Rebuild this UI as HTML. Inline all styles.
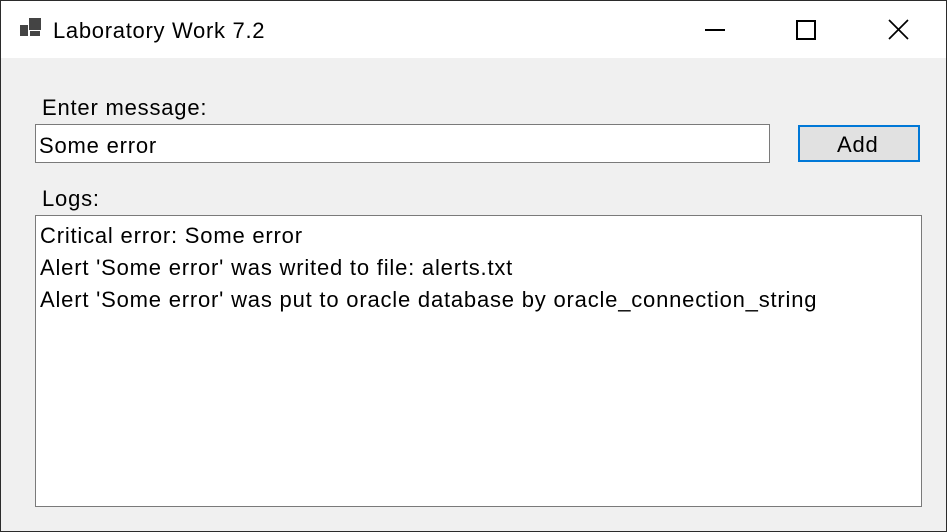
<!DOCTYPE html>
<html><head><style>
body{margin:0;width:947px;height:532px;overflow:hidden;font-family:"Liberation Sans","DejaVu Sans",sans-serif;}
.win{position:absolute;left:0;top:0;width:945px;height:530px;border:1px solid #2b2b2b;background:#f0f0f0;}
.title{position:absolute;left:0;top:0;width:945px;height:57px;background:#fff;}
.t{position:absolute;white-space:nowrap;color:#000;font-size:22px;letter-spacing:0.8px;}
.box{position:absolute;background:#fff;border:1px solid #7a7a7a;}
</style></head><body>
<div class="win">
<div class="title">
<svg style="position:absolute;left:18px;top:16px" width="26" height="22"><rect x="1" y="8" width="8" height="11" fill="#444"/><rect x="10" y="1" width="12" height="12" fill="#444"/><rect x="11" y="14" width="10" height="5" fill="#444"/></svg>
<div class="t" style="left:52px;top:17px;letter-spacing:0.7px">Laboratory Work 7.2</div>
<div style="position:absolute;left:704px;top:28px;width:20px;height:2px;background:#000"></div>
<div style="position:absolute;left:795px;top:19px;border:2px solid #000;box-sizing:border-box;width:20px;height:20px"></div>
<svg style="position:absolute;left:887px;top:18px" width="22" height="22"><path d="M1 1L20 20M20 1L1 20" stroke="#000" stroke-width="1.7"/></svg>
</div>
<div class="t" style="left:41px;top:94px">Enter message:</div>
<div class="box" style="left:34px;top:123px;width:733px;height:37px"></div>
<div class="t" style="left:38px;top:132px">Some error</div>
<div style="position:absolute;left:797px;top:124px;width:118px;height:33px;border:2px solid #0078d7;background:#e1e1e1"></div>
<div class="t" style="left:836px;top:131px">Add</div>
<div class="t" style="left:41px;top:185px">Logs:</div>
<div class="box" style="left:34px;top:214px;width:885px;height:290px"></div>
<div class="t" style="left:39px;top:222px">Critical error: Some error</div>
<div class="t" style="left:39px;top:254px">Alert 'Some error' was writed to file: alerts.txt</div>
<div class="t" style="left:39px;top:286px">Alert 'Some error' was put to oracle database by oracle_connection_string</div>
</div>
</body></html>
